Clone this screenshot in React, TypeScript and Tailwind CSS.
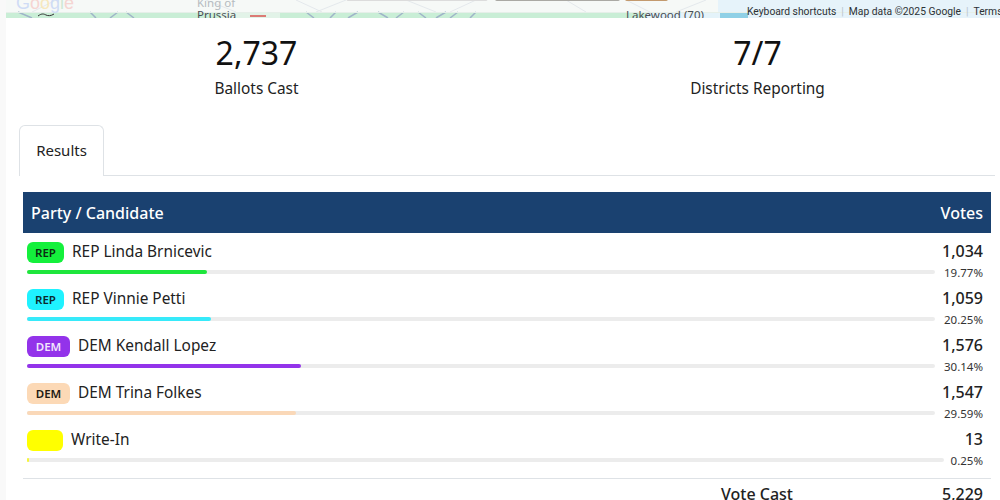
const FONT = "font-['Noto_Sans',sans-serif]";

interface Candidate {
  party: string;
  badgeClass: string;
  name: string;
  votes: string;
  pct: number;
  barColor: string;
}

const CANDIDATES: Candidate[] = [
  { party: "REP", badgeClass: "bg-[#14f03c] text-[#0c2a12] w-[37px]", name: "REP Linda Brnicevic", votes: "1,034", pct: 19.77, barColor: "#1ee63c" },
  { party: "REP", badgeClass: "bg-[#1ff2ff] text-[#0c2a30] w-[37px]", name: "REP Vinnie Petti", votes: "1,059", pct: 20.25, barColor: "#37eafa" },
  { party: "DEM", badgeClass: "bg-[#9333ea] text-[#f1e6fc] w-[43px]", name: "DEM Kendall Lopez", votes: "1,576", pct: 30.14, barColor: "#9333ea" },
  { party: "DEM", badgeClass: "bg-[#fcd9b6] text-[#231a12] w-[43px]", name: "DEM Trina Folkes", votes: "1,547", pct: 29.59, barColor: "#fad8b8" },
  { party: "", badgeClass: "bg-[#ffff00] w-[36px]", name: "Write-In", votes: "13", pct: 0.25, barColor: "#f5f53a" },
];

function MapStrip() {
  return (
    <div className="relative h-[18px] overflow-hidden bg-[#c9eed6]">
      {/* map roads, just the sliver that shows */}
      <svg className="absolute inset-0" width="994" height="18" viewBox="0 0 994 18" fill="none">
        <rect x="0" y="0" width="994" height="12" fill="#f6f9f7" />
        <rect x="214" y="12" width="60" height="6" fill="#e2f3e8" />
        <rect x="640" y="12" width="354" height="6" fill="#e4f3fa" />
        <rect x="712" y="0" width="282" height="18" fill="#e6f3fa" />
        <rect x="714" y="12" width="28" height="6" fill="#8fd0e6" />
        <path d="M12 12l14 6M84 12l6 6M112 12l-8 6M120 12l8 6M300 12l8 6M330 12l-6 6M352 12l-10 6M372 12l10 6M398 12l-8 6M412 12l8 6M440 12l-10 6M452 12l-8 6M470 12l-6 6" stroke="#9fb4c8" strokeWidth="1.5" />
        <path d="M290 0l26 12M340 0l-30 12M400 0l30 12M470 0l-26 12M560 0l20 12M620 0l24 12M700 0l-30 12M50 0l-24 12M200 0l30 12" stroke="#e4e8ec" strokeWidth="1" />
        <path d="M32 16c4-3 6-2 8-1s5 1 8-1" stroke="#333" strokeWidth="1" />
        <path d="M244 16h16" stroke="#d9534f" strokeWidth="1.5" />
        <rect x="0" y="12" width="994" height="1" fill="#e6efe9" />
      </svg>
      <span className="absolute left-[10px] top-[-9px] font-['Liberation_Sans',sans-serif] text-[18px] leading-[24px]">
        <span className="text-[#cfdcf5]">G</span>
        <span className="text-[#f5d5d2]">o</span>
        <span className="text-[#f7e8bd]">o</span>
        <span className="text-[#cfdcf5]">g</span>
        <span className="text-[#cfe8d4]">l</span>
        <span className="text-[#f5d5d2]">e</span>
      </span>
      <span className="absolute left-[191px] top-[-4px] text-[11.5px] leading-[14px] text-[#b5bbc0]">King of</span>
      <span className="absolute left-[191px] top-[8px] text-[11.5px] leading-[14px] text-[#4a4f55]">Prussia</span>
      <span className="absolute left-[620px] top-[8px] text-[11.5px] leading-[14px] text-[#4a4f55]">Lakewood (70)</span>
      <div className="absolute left-[340px] top-[-6px] h-[7px] w-[142px] rounded-[2px] border border-[#dcdcdc] bg-[#f8f8f8]" />
      <div className="absolute left-[489px] top-[-6px] h-[7px] w-[125px] rounded-[2px] bg-[#aaa9a4]" />
      <div className="absolute left-[619px] top-[-6px] h-[7px] w-[43px] rounded-[2px] bg-[#c39a6e]" />
      <div className="absolute left-[741px] top-[6px] flex items-center gap-[5px] whitespace-nowrap font-['Roboto',sans-serif] text-[10.3px] leading-[12px] text-[#2c3136]">
        <span>Keyboard shortcuts</span>
        <span className="text-[#b8c4cc]">|</span>
        <span>Map data ©2025 Google</span>
        <span className="text-[#b8c4cc]">|</span>
        <span>Terms</span>
      </div>
    </div>
  );
}

function Stat({ value, label }: { value: string; label: string }) {
  return (
    <div className="flex flex-col items-center">
      <div className="text-[32px] leading-[44px] text-[#111]">{value}</div>
      <div className="mt-[3px] text-[15.4px] leading-[22px] text-[#222]">{label}</div>
    </div>
  );
}

function CandidateRow({ c }: { c: Candidate }) {
  return (
    <div className="flex h-[47px] gap-[7px] pl-1 pr-2 pt-[9px]">
      <div className="min-w-0 flex-1">
        <div className="flex h-[21px] items-center gap-2">
          <span className={`flex h-[21px] items-center justify-center rounded-[6px] text-[11.5px] font-semibold ${c.badgeClass}`}>
            {c.party}
          </span>
          <span className="-mt-[2px] text-[15.4px] leading-[20px] text-[#222]">{c.name}</span>
        </div>
        <div className="mt-[7px] h-1 rounded-full bg-[#ececec]">
          <div className="h-1 rounded-full" style={{ width: `${c.pct}%`, background: c.barColor }} />
        </div>
      </div>
      <div className="-mt-px text-right">
        <div className="text-[16px] font-medium leading-[20px] text-[#222]">{c.votes}</div>
        <div className="mt-[3px] text-[11.5px] leading-[17px] text-[#333]">{c.pct.toFixed(2)}%</div>
      </div>
    </div>
  );
}

export default function App() {
  return (
    <div className={`${FONT} h-[500px] w-[1000px] overflow-hidden bg-[#f9f9f9] pl-[6px]`}>
      <div className="h-full bg-white">
        <MapStrip />

        <div className="mt-[13px] grid w-[1002px] grid-cols-2">
          <Stat value="2,737" label="Ballots Cast" />
          <Stat value="7/7" label="Districts Reporting" />
        </div>

        {/* tabs */}
        <div className="ml-[13px] mt-[25px] w-[976px] border-b border-[#dee2e6]">
          <div className="-mb-px flex h-[51px] w-[85px] items-center justify-center rounded-t-[6px] border border-b-0 border-[#dee2e6] bg-white pb-[2px] text-[15px] text-[#222]">
            Results
          </div>
        </div>

        <div className="ml-[17px] mt-4 w-[968px]">
          <div className="flex h-[41px] items-center justify-between bg-[#1a4170] px-2 text-[16px] font-medium text-white">
            <span>Party / Candidate</span>
            <span>Votes</span>
          </div>
          {CANDIDATES.map((c) => (
            <CandidateRow key={c.name} c={c} />
          ))}
          <div className="mt-[10px] flex justify-end border-t border-[#dee2e6] pr-2 pt-[5px] text-[16px] font-medium leading-[20px] text-[#222]">
            <span className="w-[221px]">Vote Cast</span>
            <span>5,229</span>
          </div>
        </div>
      </div>
    </div>
  );
}
